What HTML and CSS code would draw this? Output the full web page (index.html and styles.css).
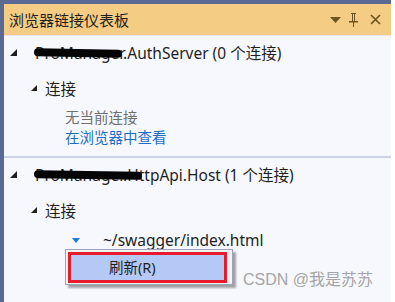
FILE: index.html
```html
<!DOCTYPE html>
<html lang="zh-CN">
<head>
  <meta charset="UTF-8" />
  <title>浏览器链接仪表板</title>
  <link rel="stylesheet" href="styles.css">
</head>
<body>

<div class="panel">
  <div class="titlebar">
    <span class="title">浏览器链接仪表板</span>
    <span class="tools">
      <svg width="11" height="6" viewBox="0 0 11 6"><path d="M0 0h11L5.5 6z" fill="#6b5420"/></svg>
      <svg width="9" height="14" viewBox="0 0 9 14"><path d="M2 0h5v1H6v7h3v1.5H5V14H4V9.5H0V8h3V1H2z" fill="#6b5420"/><path d="M4 1h1v7H4z" fill="#f5cc84"/></svg>
      <svg width="11" height="11" viewBox="0 0 11 11"><path d="M1 1l9 9M10 1l-9 9" stroke="#6b5420" stroke-width="1.6"/></svg>
    </span>
  </div>

  <div class="content">
    <div class="section">
      <div class="row project">
        <span class="arrow"></span>
        <span class="name">ProManager.AuthServer (0 个连接)<span class="scribble s1"></span></span>
      </div>
      <div class="row group">
        <span class="arrow"></span>
        <span>连接</span>
      </div>
      <div class="detail">
        <div class="empty">无当前连接</div>
        <div class="link">在浏览器中查看</div>
      </div>
    </div>

    <div class="section second">
      <div class="row project">
        <span class="arrow"></span>
        <span class="name">ProManager.HttpApi.Host (1 个连接)<span class="scribble s2"></span></span>
      </div>
      <div class="row group">
        <span class="arrow"></span>
        <span>连接</span>
      </div>
      <div class="row page">
        <span class="arrow-blue"></span>
        <span>~/swagger/index.html</span>
      </div>
    </div>

    <div class="menu">
      <div class="menu-item">刷新(R)</div>
    </div>

    <div class="watermark">CSDN @我是苏苏</div>
  </div>
</div>

</body>
</html>
```

FILE: styles.css
```css
body {
  margin: 0;
  background: #fff;
  font-family: "Noto Sans", "Noto Sans CJK SC", sans-serif;
  color: #1e1e1e;
}

.panel {
  width: 387px;
  height: 298px;
  border-left: 4px solid #5b6a92;
  border-top: 4px solid #5b6a92;
  display: flex;
  flex-direction: column;
}

.titlebar {
  height: 31px;
  background: #f5cc84;
  display: flex;
  align-items: center;
  justify-content: space-between;
  padding: 0 10px 0 5px;
  border-bottom: 1px solid #e3e6f2;
}

.title {
  font-size: 15px;
  color: #1e1e1e;
  font-family: "Noto Sans CJK SC", sans-serif;
}

.tools {
  display: flex;
  align-items: center;
  gap: 8px;
}

.tools svg:last-child {
  margin-left: 4px;
}

.content {
  flex: 1;
  background: #f7f8fe;
  position: relative;
}

.section {
  padding-bottom: 9px;
}

.second {
  border-top: 2px solid #ccd3e6;
}

.row {
  display: flex;
  align-items: center;
  font-size: 15.5px;
  height: 40px;
}

.project {
  padding-left: 6px;
  height: 32px;
}

.group {
  padding-left: 27px;
}

.arrow {
  width: 0;
  height: 0;
  border-left: 7px solid transparent;
  border-bottom: 7px solid #1e1e1e;
  margin-right: 18px;
}

.group .arrow {
  border-left-width: 6px;
  border-bottom-width: 6px;
  margin-right: 8px;
}

.name {
  position: relative;
}

.scribble {
  position: absolute;
  top: 8px;
  left: -1px;
  height: 8px;
  background: #050505;
  border-radius: 5px;
  transform: rotate(1deg);
}

.s1 { width: 88px; }
.s2 { width: 108px; }

.detail {
  padding-left: 61px;
  font-size: 14.5px;
  line-height: 20px;
  margin-top: -1px;
}

.empty { color: #6f6f6f; }
.link { color: #1b6ec7; }

.page {
  padding-left: 68px;
  height: 20px;
}

.arrow-blue {
  width: 0;
  height: 0;
  border-left: 4px solid transparent;
  border-right: 4px solid transparent;
  border-top: 5px solid #1f7ad6;
  margin-right: 23px;
}

.menu {
  position: absolute;
  left: 61px;
  top: 213px;
  width: 159px;
  padding: 2px 5px 1px 2px;
  background: #f2f2f2;
  border: 1px solid #9aa4b8;
  box-shadow: 3px 3px 2px rgba(0, 0, 0, 0.35);
}

.menu-item {
  height: 25px;
  line-height: 25px;
  background: #b4c9f6;
  border: 3px solid #e81b2c;
  padding-left: 38px;
  font-size: 14.5px;
  color: #1e1e1e;
}

.watermark {
  position: absolute;
  left: 239px;
  top: 230px;
  font-size: 16px;
  color: #a5a5a5;
  font-family: "Liberation Sans", "Noto Sans CJK SC", sans-serif;
}
```
